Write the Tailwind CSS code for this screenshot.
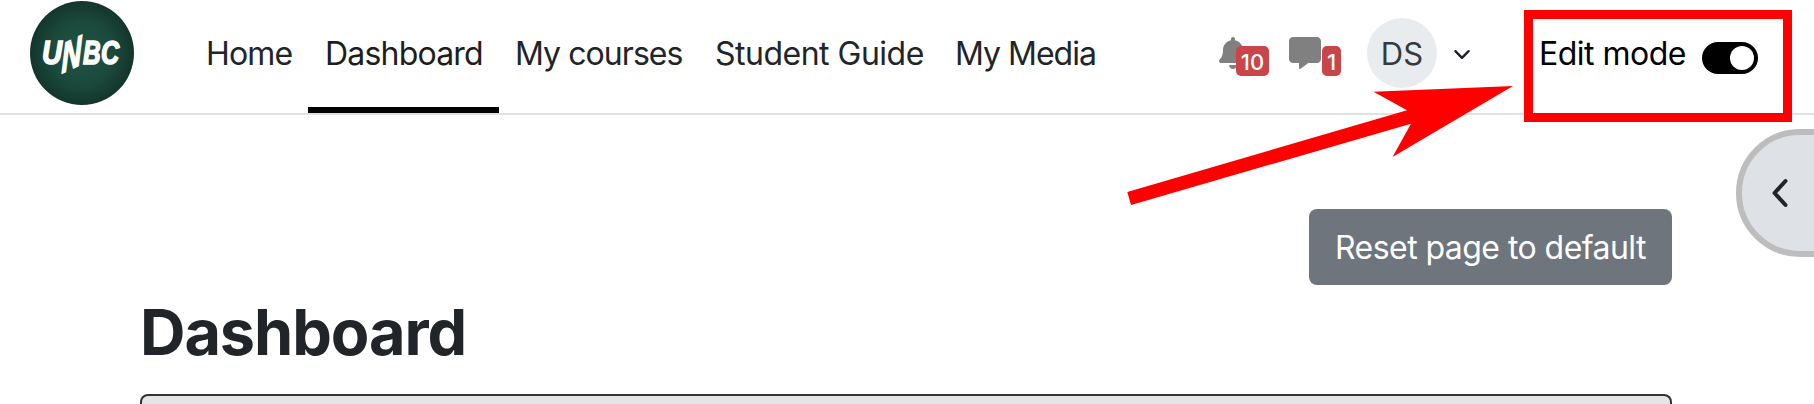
<!DOCTYPE html>
<html lang="en">
<head>
<meta charset="utf-8">
<title>Dashboard</title>
<script src="https://cdn.jsdelivr.net/npm/@tailwindcss/browser@4"></script>
</head>
<body class="relative h-[404px] overflow-hidden bg-white font-['Inter',sans-serif] text-[#212529]">
<header class="flex h-[115px] border-b-2 border-[#dee2e6] text-[32px] leading-[48px] whitespace-nowrap">
  <a class="ml-[30px] w-[158px] shrink-0" aria-label="UNBC">
    <svg width="104" height="106" viewBox="30 0 104 106">
      <defs>
        <radialGradient id="disc"><stop offset="0" stop-color="#1f5444"/><stop offset=".6" stop-color="#1b4a3c"/><stop offset="1" stop-color="#14352c"/></radialGradient>
      </defs>
      <circle cx="82" cy="53" r="52" fill="url(#disc)"/>
      <g fill="#fff" stroke="#fff" stroke-width="1.6" font-family="Liberation Sans" font-weight="700" font-style="italic">
        <text transform="translate(42 64.2) scale(.84 1)" font-size="33">U</text>
        <text transform="translate(61.5 73.500) skewY(-25) scale(.66 1)" font-size="42">N</text>
        <text transform="translate(83 64.2) scale(.74 1)" font-size="33">B</text>
        <text transform="translate(101 64.2) scale(.76 1)" font-size="33">C</text>
      </g>
    </svg>
  </a>
  <nav class="flex">
    <a class="w-[120px] pt-[30px] pl-[18px] tracking-[-0.8px]">Home</a>
    <a class="w-[191px] border-b-6 border-black pt-[30px] pl-[17px] tracking-[-0.8px] text-[#1d1d1d]">Dashboard</a>
    <a class="w-[199px] pt-[30px] pl-4 tracking-[-0.94px]">My courses</a>
    <a class="w-[241px] pt-[30px] pl-[17px] tracking-[-0.5px]">Student Guide</a>
    <a class="w-[173px] pt-[30px] pl-4 tracking-[-1px]">My Media</a>
  </nav>
  <div class="ml-[107px] flex">
    <div class="flex w-[69.5px] pt-[37px]">
      <svg class="h-8 w-7 shrink-0" viewBox="0 0 448 512" fill="#808080"><path d="M224 512c35.32 0 63.97-28.65 63.97-64H160.03c0 35.35 28.65 64 63.97 64zm215.39-149.71c-19.32-20.76-55.47-51.99-55.47-154.29 0-77.7-54.48-139.9-127.94-155.16V32c0-17.67-14.32-32-31.98-32s-31.98 14.33-31.98 32v20.84C118.56 68.1 64.08 130.3 64.08 208c0 102.3-36.15 133.53-55.47 154.29-6 6.45-8.66 14.16-8.61 21.71.11 16.4 12.98 32 32.1 32h383.8c19.12 0 32-15.6 32.1-32 .05-7.55-2.61-15.27-8.61-21.71z"/></svg>
      <span class="mt-[9px] -ml-[11px] h-[30px] w-[33px] rounded-[5px] bg-[#ca444b] text-center text-[22px] leading-[32px] font-medium text-white">10</span>
    </div>
    <div class="flex w-[78.5px] pt-[37px]">
      <svg class="size-8 shrink-0" viewBox="0 0 512 512" fill="#808080"><path d="M64 0C28.7 0 0 28.7 0 64V352c0 35.3 28.7 64 64 64h96v80c0 6.1 3.4 11.6 8.8 14.3s11.9 2.1 16.8-1.5L309.3 416H448c35.3 0 64-28.7 64-64V64c0-35.3-28.7-64-64-64H64z"/></svg>
      <span class="mt-[9px] ml-[1.5px] h-[30px] w-[19px] rounded-[5px] bg-[#ca444b] text-center text-[22px] leading-[32px] font-medium text-white">1</span>
    </div>
    <span class="mt-[18px] size-[70px] rounded-full bg-[#e9ecef] text-center text-[31px] leading-[71px] text-[#343a40]">DS</span>
    <svg class="mt-[49px] ml-4 h-[11px] w-[18px]" viewBox="0 0 18 11" fill="none" stroke="#1d2125" stroke-width="2.4" stroke-linecap="round" stroke-linejoin="round"><path d="M2.4 2.2 9 8.8l6.600-6.600"/></svg>
  </div>
  <div class="ml-[67px] flex text-black">
    <span class="w-[164px] pt-[30px] pl-px tracking-[-0.5px]">Edit mode</span>
    <span class="mt-[42px] flex h-8 w-14 items-center justify-end rounded-full bg-black pr-1"><span class="size-6 rounded-full bg-white"></span></span>
  </div>
</header>
<main class="ml-[140px] h-[289px] w-[1532px] overflow-hidden">
  <div class="flex justify-end pt-[94px]">
    <button class="h-[76px] w-[363px] rounded-lg bg-[#6e757d] pt-[2px] pl-[26px] text-left text-[32px] leading-[48px] tracking-[-0.55px] whitespace-nowrap text-white">Reset page to default</button>
  </div>
  <h1 class="mt-[9px] h-[100px] text-[63px] leading-[76px] font-bold tracking-[-1.1px]">Dashboard</h1>
  <section class="h-[10px] rounded-t-lg border-2 border-b-0 border-[#333] bg-[#e5e5e5]"></section>
</main>
<button class="absolute top-[129px] left-[1736px] h-32 w-[90px] rounded-l-[64px] border-6 border-[#bdbdbd] bg-[#dee2e6]" aria-label="Open block drawer">
  <svg class="ml-[29px]" width="18" height="30" viewBox="0 0 18 30" fill="none" stroke="#212529" stroke-width="4" stroke-linecap="round" stroke-linejoin="round"><path d="M14.500 3 3.500 15l11 12"/></svg>
</button>
<div class="absolute top-[10px] left-[1524px] h-[112px] w-[268px] border-9 border-[#f00]"></div>
<svg class="absolute top-[80px] left-[1120px]" width="400" height="130" viewBox="1120 80 400 130" fill="#f00"><path d="M1127.300 192 1407 110.300 1373.500 91.800 1513 86 1392.500 157 1411 123.700 1131 205z"/></svg>
</body>
</html>
